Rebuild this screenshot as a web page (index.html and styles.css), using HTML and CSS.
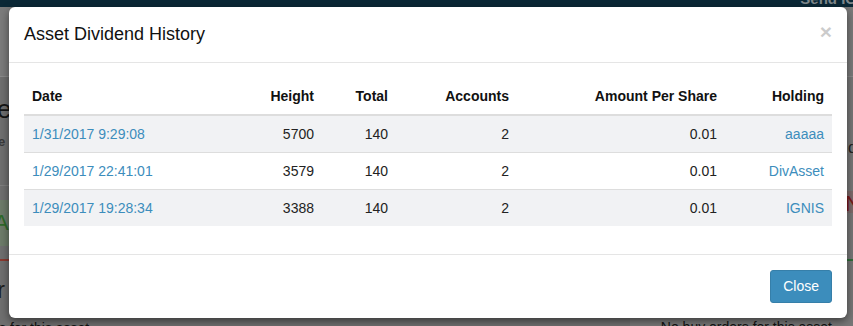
FILE: index.html
```html
<!DOCTYPE html>
<html>
<head>
<meta charset="utf-8">
<link rel="stylesheet" href="styles.css">
</head>
<body>
<div class="page">
  <div class="navbar"><span class="nav-send">Send IGNIS</span></div>
  <div class="page-head"></div>
  <div class="cols">
    <div class="col col-left">
      <div class="big-e">e</div>
      <div class="small-e">e</div>
      <div class="sep"></div>
      <div class="green-box">A</div>
      <div class="red-line"></div>
      <div class="sub-r">r</div>
      <div class="empty-left">s for this asset</div>
    </div>
    <div class="col col-right">
      <div class="right-d">d</div>
      <div class="red-box">N</div>
      <div class="green-line"></div>
      <div class="empty-right">No buy orders for this asset</div>
    </div>
  </div>
</div>

<div class="modal">
  <div class="modal-header">
    <span class="close">&times;</span>
    <h4 class="modal-title">Asset Dividend History</h4>
  </div>
  <div class="modal-body">
    <table class="table">
      <colgroup>
        <col class="c-date"><col class="c-height"><col class="c-total"><col class="c-acc"><col class="c-amt"><col class="c-hold">
      </colgroup>
      <thead>
        <tr><th>Date</th><th class="r">Height</th><th class="r">Total</th><th class="r">Accounts</th><th class="r">Amount Per Share</th><th class="r">Holding</th></tr>
      </thead>
      <tbody>
        <tr class="odd"><td><a>1/31/2017 9:29:08</a></td><td class="r">5700</td><td class="r">140</td><td class="r">2</td><td class="r">0.01</td><td class="r"><a>aaaaa</a></td></tr>
        <tr><td><a>1/29/2017 22:41:01</a></td><td class="r">3579</td><td class="r">140</td><td class="r">2</td><td class="r">0.01</td><td class="r"><a>DivAsset</a></td></tr>
        <tr class="odd"><td><a>1/29/2017 19:28:34</a></td><td class="r">3388</td><td class="r">140</td><td class="r">2</td><td class="r">0.01</td><td class="r"><a>IGNIS</a></td></tr>
      </tbody>
    </table>
  </div>
  <div class="modal-footer">
    <button class="btn">Close</button>
  </div>
</div>
</body>
</html>
```

FILE: styles.css
```css
html, body {
  margin: 0;
  padding: 0;
}
body {
  width: 853px;
  height: 326px;
  overflow: hidden;
  position: relative;
  font-family: "Liberation Sans", Arial, sans-serif;
  font-size: 14px;
  line-height: 1.42857;
  color: #333;
  background: #727272;
}

/* ---------- dimmed page behind the modal ---------- */
.page {
  width: 853px;
  height: 326px;
  display: flex;
  flex-direction: column;
  overflow: hidden;
}
.navbar {
  flex-shrink: 0;
  height: 7px;
  background: #0b2836;
  overflow: hidden;
  display: flex;
  justify-content: flex-end;
}
.nav-send {
  font-weight: bold;
  font-size: 15px;
  line-height: 16px;
  color: #7f878b;
  margin-top: -9px;
  margin-right: -29px;
  white-space: nowrap;
}
.page-head {
  flex-shrink: 0;
  height: 69px;
  background: #7b7b7b;
  border-bottom: 1px solid #8a8a8a;
}
.cols {
  flex: 1 0 auto;
  display: grid;
  grid-template-columns: 630px 1fr;
  background: #6f6f6f;
}
.col {
  display: flex;
  flex-direction: column;
}
.big-e {
  font-size: 26px;
  line-height: 30px;
  color: #151515;
  margin-top: 17px;
  margin-left: -3px;
}
.small-e {
  font-size: 13px;
  font-weight: bold;
  line-height: 16px;
  color: #3a3a3a;
  margin-top: 10px;
  margin-left: -2px;
}
.sep {
  height: 1px;
  background: #7e7e7e;
  margin-top: 35px;
}
.green-box {
  height: 46px;
  margin-top: 14px;
  background: #6d7b69;
  color: #2f6a2a;
  font-size: 22px;
  line-height: 46px;
  text-indent: -6px;
}
.red-line {
  height: 2px;
  background: #8a3a30;
  margin-top: 13px;
}
.sub-r {
  font-size: 24px;
  line-height: 28px;
  color: #1c1c1c;
  margin-top: 15px;
  text-indent: -3px;
}
.empty-left {
  font-size: 14px;
  line-height: 16px;
  color: #111;
  margin-top: 16px;
  text-indent: -1px;
  white-space: nowrap;
}
.col-right {
  background: #777;
  align-items: flex-end;
}
.right-d {
  font-size: 16px;
  color: #222;
  margin-top: 62px;
  margin-right: -4px;
  line-height: 18px;
}
.red-box {
  align-self: stretch;
  height: 22px;
  margin-top: 34px;
  background: #7d6a6a;
  color: #7a1a1a;
  font-size: 22px;
  line-height: 26px;
  text-align: right;
  margin-right: -8px;
  overflow: hidden;
}
.green-line {
  align-self: stretch;
  height: 2px;
  margin-top: 46px;
  background: #2f6e3a;
}
.empty-right {
  margin-top: 58px;
  margin-right: 21px;
  font-size: 14px;
  line-height: 16px;
  color: #111;
  white-space: nowrap;
}

/* ---------- modal ---------- */
.modal {
  position: absolute;
  left: 9px;
  top: 7px;
  width: 838px;
  background: #fff;
  border-radius: 6px;
  box-shadow: 0 3px 9px rgba(0, 0, 0, 0.5);
}
.modal-header {
  padding: 15px;
  border-bottom: 1px solid #e5e5e5;
}
.modal-title {
  margin: 0;
  font-size: 18px;
  font-weight: normal;
  line-height: 25px;
  color: #111;
}
.close {
  float: right;
  font-size: 21px;
  font-weight: bold;
  line-height: 1;
  color: #000;
  opacity: 0.2;
  margin-top: -1px;
}
.modal-body {
  padding: 15px;
}
.table {
  width: 808px;
  border-collapse: collapse;
  border-spacing: 0;
  table-layout: fixed;
  margin-bottom: 13px;
}
.c-date { width: 216px; }
.c-height { width: 82px; }
.c-total { width: 74px; }
.c-acc { width: 121px; }
.c-amt { width: 208px; }
.c-hold { width: 107px; }
.table th, .table td {
  padding: 8px;
  line-height: 20px;
  text-align: left;
  vertical-align: top;
}
.table th {
  font-weight: bold;
  color: #111;
  border-bottom: 2px solid #dddddd;
}
.table td {
  border-top: 1px solid #dddddd;
  color: #222;
}
.table .r {
  text-align: right;
}
.table tr.odd td {
  background: #f1f2f4;
}
.table a {
  color: #3c8dbc;
  text-decoration: none;
}
.modal-footer {
  padding: 15px;
  border-top: 1px solid #e5e5e5;
  display: flex;
  justify-content: flex-end;
}
.btn {
  font-family: "Liberation Sans", Arial, sans-serif;
  font-size: 14px;
  line-height: 19px;
  padding: 6px 12px;
  color: #fff;
  background: #3c8dbc;
  border: 1px solid #367fa9;
  border-radius: 3px;
}
```
